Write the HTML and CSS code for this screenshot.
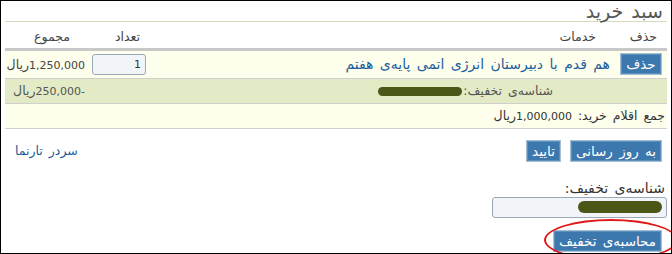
FILE: index.html
```html
<!DOCTYPE html>
<html lang="fa" dir="rtl">
<head>
  <meta charset="UTF-8" />
  <title>سبد خرید</title>
  <link rel="stylesheet" href="styles.css">
</head>
<body>
  <div class="page">
    <h1 class="title">سبد خرید</h1>

    <table class="cart">
      <thead>
        <tr>
          <th class="col-del">حذف</th>
          <th class="col-name">خدمات</th>
          <th class="col-qty">تعداد</th>
          <th class="col-total">مجموع</th>
        </tr>
      </thead>
      <tbody>
        <tr class="item">
          <td class="col-del"><button class="btn">حذف</button></td>
          <td class="col-name"><a href="#" class="link product">هم قدم با دبیرستان انرژی اتمی پایه‌ی هفتم</a></td>
          <td class="col-qty"><input class="qty" type="text" value="1" dir="ltr"></td>
          <td class="col-total"><span class="num">1,250,000</span>ریال</td>
        </tr>
        <tr class="coupon">
          <td colspan="2" class="coupon-label">شناسه‌ی تخفیف:<span class="mask"></span></td>
          <td class="col-qty"></td>
          <td class="col-total"><span class="num">-250,000</span>ریال</td>
        </tr>
        <tr class="sum">
          <td colspan="4">جمع اقلام خرید: <span class="num">1,000,000</span>ریال</td>
        </tr>
      </tbody>
    </table>

    <div class="actions">
      <div class="action-btns">
        <button class="btn">به روز رسانی</button>
        <button class="btn">تایید</button>
      </div>
      <a href="#" class="link home">سردر تارنما</a>
    </div>

    <div class="discount">
      <label class="discount-label">شناسه‌ی تخفیف:</label>
      <div class="code-box"><span class="mask mask-lg"></span></div>
      <div class="calc-row">
        <button class="btn">محاسبه‌ی تخفیف</button>
      </div>
    </div>

    <!-- annotation -->
    <div class="circle"></div>
  </div>
</body>
</html>
```

FILE: styles.css
```css
* {
  box-sizing: border-box;
}

body {
  margin: 0;
  font-family: 'DejaVu Sans', sans-serif;
  font-size: 12.5px;
  word-spacing: 2px;
  color: #333;
  background: #fff;
}

.num {
  font-size: 11px;
  word-spacing: 0;
}

.page {
  position: relative;
  width: 672px;
  height: 254px;
  border: 1px solid #000;
  padding: 0 4px;
  overflow: hidden;
}

.title {
  margin: 0;
  height: 21px;
  line-height: 20px;
  font-size: 19px;
  font-weight: normal;
  color: #555;
  border-bottom: 1px solid #d6dabd;
  padding-right: 4px;
}

.cart {
  width: 100%;
  border-collapse: collapse;
}

.cart th {
  height: 27px;
  font-weight: normal;
  color: #444;
  text-align: right;
  border-bottom: 3px solid #c8c8c8;
  padding: 4px 0 0;
}

.cart td {
  border-bottom: 1px solid #cfcfcf;
  padding: 0;
}

.col-del { width: 52px; }
.col-qty { width: 62px; }
.col-total { width: 83px; }

th.col-del { padding-right: 10px; }
th.col-name { padding-right: 19px; }
th.col-qty { padding-right: 10px; }
th.col-total { padding-right: 18px; }

.item td {
  height: 29px;
  background: #fdfeec;
}

td.col-del { text-align: center; }
td.col-name { padding-right: 5px; }
td.col-qty { text-align: center; }
td.col-total { padding-right: 3px; color: #444; }

.product {
  font-size: 14px;
  word-spacing: 2px;
}

.coupon td {
  height: 25px;
  background: #e3eac6;
  color: #555;
}

.coupon-label {
  padding-right: 114px !important;
}

.sum td {
  height: 25px;
  background: #fdfeec;
  color: #333;
  padding-right: 2px;
}

.mask {
  display: inline-block;
  width: 84px;
  height: 9px;
  margin-right: 1px;
  vertical-align: middle;
  background: #4a5716;
  border-radius: 5px;
}

.link {
  color: #1d5e9c;
  text-decoration: none;
}

.qty {
  width: 54px;
  height: 21px;
  border: 1px solid #9aa8b4;
  border-radius: 3px;
  background: #f1f5fa;
  text-align: right;
  font: 11px 'DejaVu Sans', sans-serif;
  color: #333;
  padding: 0 4px;
}

.btn {
  height: 22px;
  padding: 0 5px;
  font: 13.5px 'DejaVu Sans', sans-serif;
  word-spacing: 2px;
  color: #fff;
  background: #3c78ae;
  border: 1px solid #a7bdd1;
  box-shadow: inset 0 0 0 1px #5a8fc0;
  cursor: pointer;
}

.actions {
  display: flex;
  justify-content: space-between;
  align-items: center;
  margin-top: 11px;
  padding-right: 5px;
}

.action-btns {
  display: flex;
  gap: 9px;
}

.home {
  margin-left: 10px;
}

.discount {
  margin-top: 18px;
}

.discount-label {
  display: block;
  font-size: 14px;
  color: #333;
  line-height: 16px;
  padding-right: 2px;
}

.code-box {
  width: 175px;
  height: 21px;
  margin-top: 1px;
  border: 1px solid #9aa8b4;
  border-radius: 3px;
  background: #f1f5fa;
  padding: 3px 4px 0 0;
}

.mask-lg {
  width: 84px;
  height: 12px;
  display: block;
  margin: 0;
  border-radius: 6px;
}

.calc-row {
  margin-top: 12px;
  padding-right: 5px;
}

.circle {
  position: absolute;
  left: 543px;
  top: 218px;
  width: 134px;
  height: 42px;
  border: 2px solid #e01818;
  border-radius: 50%;
}
```
